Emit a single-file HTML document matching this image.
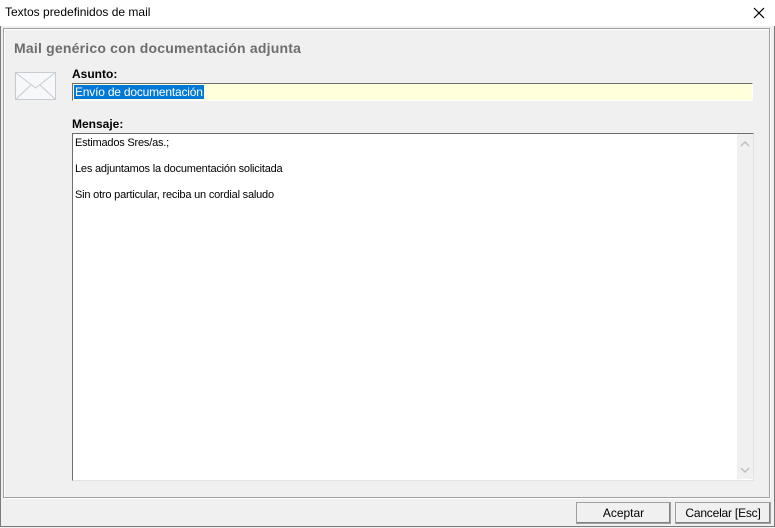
<!DOCTYPE html><html><head><style>
body{margin:0;width:775px;height:528px;background:#f0f0f0;font-family:"Liberation Sans",sans-serif;position:relative;overflow:hidden}
.a{position:absolute}
.t{font-size:11px;line-height:13px;letter-spacing:-0.2px}
</style></head><body>
<div class="a" style="left:0;top:0;width:773px;height:526px;border:1px solid #7a7a7a;border-top:none"></div>
<div class="a" style="left:0;top:0;width:775px;height:26px;background:#fff"></div>
<div class="a" style="left:5px;top:5px;font-size:12px;color:#000">Textos predefinidos de mail</div>
<svg class="a" style="left:753px;top:7px" width="12" height="12"><path d="M1 1L11 11M11 1L1 11" stroke="#000" stroke-width="1.2"/></svg>
<div class="a" style="left:3px;top:28px;width:765px;height:468px;border:1px solid #a0a0a0;box-shadow:inset 1px 1px 0 #fff,1px 1px 0 #fff"></div>
<div class="a" style="left:14px;top:40px;font-size:14px;font-weight:bold;color:#6d6d6d;letter-spacing:0.2px">Mail genérico con documentación adjunta</div>
<svg class="a" style="left:15px;top:72px" width="41" height="28"><rect x="0.5" y="0.5" width="40" height="27" fill="#f6f8fa" stroke="#c8ccd2"/><path d="M1 1L20.5 16L40 1M1 27L16 13M40 27L25 13" stroke="#c8ccd2" fill="none"/></svg>
<div class="a" style="left:72px;top:67px;font-size:12px;font-weight:bold">Asunto:</div>
<div class="a" style="left:72px;top:83px;width:679px;height:16px;background:#ffffdc;border-top:1px solid #6d6d6d;border-left:1px solid #6d6d6d;border-right:1px solid #fff;border-bottom:1px solid #fff"></div>
<div class="a t" style="left:74px;top:85px;height:14px;background:#0078d7;color:#fff;font-size:12px;line-height:14px;padding:0 1px">Envío de documentación</div>
<div class="a" style="left:72px;top:117px;font-size:12px;font-weight:bold">Mensaje:</div>
<div class="a" style="left:72px;top:133px;width:680px;height:346px;background:#fff;border-top:1px solid #6d6d6d;border-left:1px solid #6d6d6d;border-right:1px solid #e3e3e3;border-bottom:1px solid #e3e3e3"></div>
<div class="a" style="left:737px;top:134px;width:16px;height:345px;background:#f0f0f0"></div>
<svg class="a" style="left:740px;top:140px" width="10" height="8"><path d="M1 6L5 2L9 6" stroke="#c0c0c0" stroke-width="1.5" fill="none"/></svg>
<svg class="a" style="left:740px;top:466px" width="10" height="8"><path d="M1 2L5 6L9 2" stroke="#c0c0c0" stroke-width="1.5" fill="none"/></svg>
<div class="a t" style="left:75px;top:137px">Estimados Sres/as.;</div>
<div class="a t" style="left:75px;top:163px">Les adjuntamos la documentación solicitada</div>
<div class="a t" style="left:75px;top:189px">Sin otro particular, reciba un cordial saludo</div>
<div class="a" style="left:576px;top:502px;width:93px;height:20px;border:1px solid #a0a0a0;box-shadow:inset -1px -1px 0 #808080;background:#f0f0f0;font-size:12px;line-height:20px;text-align:center">Aceptar</div>
<div class="a" style="left:675px;top:502px;width:94px;height:20px;border:1px solid #a0a0a0;box-shadow:inset -1px -1px 0 #808080;background:#f0f0f0;font-size:12px;line-height:20px;text-align:center;letter-spacing:-0.2px">Cancelar [Esc]</div>
</body></html>
